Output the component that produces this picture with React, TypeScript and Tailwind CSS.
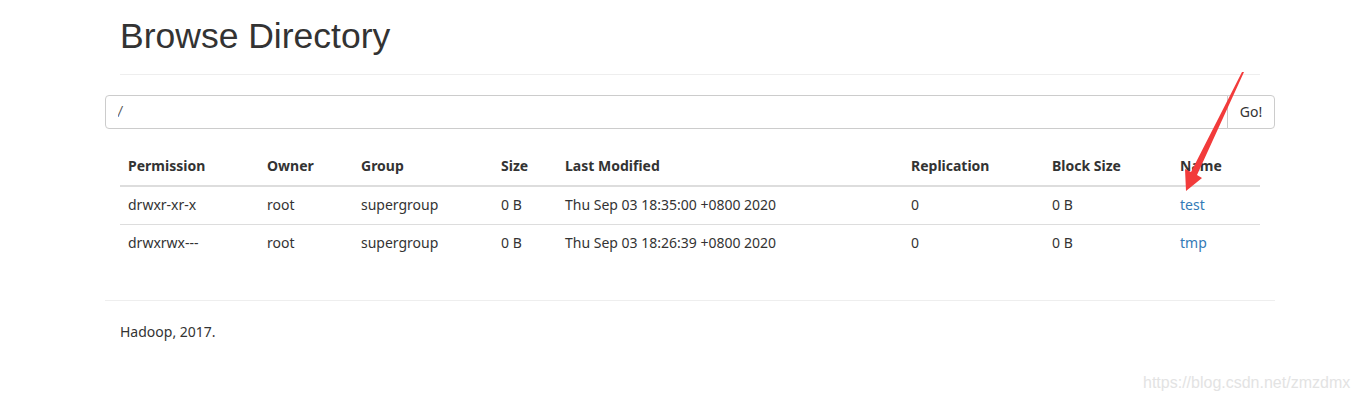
const ROWS = [
  {
    permission: 'drwxr-xr-x',
    owner: 'root',
    group: 'supergroup',
    size: '0 B',
    modified: 'Thu Sep 03 18:35:00 +0800 2020',
    replication: '0',
    blockSize: '0 B',
    name: 'test',
  },
  {
    permission: 'drwxrwx---',
    owner: 'root',
    group: 'supergroup',
    size: '0 B',
    modified: 'Thu Sep 03 18:26:39 +0800 2020',
    replication: '0',
    blockSize: '0 B',
    name: 'tmp',
  },
];

const COLUMNS = [
  { label: 'Permission', width: 'w-[139px]' },
  { label: 'Owner', width: 'w-[94px]' },
  { label: 'Group', width: 'w-[140px]' },
  { label: 'Size', width: 'w-[64px]' },
  { label: 'Last Modified', width: 'w-[346px]' },
  { label: 'Replication', width: 'w-[141px]' },
  { label: 'Block Size', width: 'w-[128px]' },
  { label: 'Name', width: 'w-[88px]' },
];

export default function App() {
  return (
    <div
      className="relative h-[400px] w-[1357px] overflow-hidden bg-white text-[14px] leading-[20px] text-[#333]"
      style={{ fontFamily: '"Noto Sans", "Noto Sans CJK SC", sans-serif' }}
    >
      <div className="ml-[105px] w-[1170px]">
        {/* Page header */}
        <div className="px-[15px]">
          <h1
            className="mt-[16px] border-b border-[#eee] pb-[18px] text-[35.5px] leading-[40px] font-normal text-[#333]"
            style={{ fontFamily: '"Liberation Sans", Arial, sans-serif' }}
          >
            Browse Directory
          </h1>
        </div>

        {/* Path input */}
        <div className="mt-[20px] flex h-[34px]">
          <input
            defaultValue="/"
            className="h-[34px] flex-1 rounded-l-[4px] border border-[#ccc] px-[12px] text-[14px] text-[#555] italic outline-none"
            style={{ fontFamily: '"Liberation Sans", Arial, sans-serif' }}
          />
          <button className="-ml-px h-[34px] w-[48px] rounded-r-[4px] border border-[#ccc] bg-white text-[14px] text-[#333]">
            Go!
          </button>
        </div>

        {/* Listing */}
        <div className="px-[15px]">
          <table className="mt-[20px] w-[1140px] table-fixed border-collapse">
            <thead>
              <tr>
                {COLUMNS.map((c) => (
                  <th
                    key={c.label}
                    className={`${c.width} border-b-2 border-[#ddd] px-[8px] pt-[7px] pb-[9px] text-left font-bold`}
                  >
                    {c.label}
                  </th>
                ))}
              </tr>
            </thead>
            <tbody>
              {ROWS.map((r, i) => (
                <tr key={r.name} className={i === 0 ? 'border-b border-[#ddd]' : ''}>
                  <td className="px-[8px] pt-[8px] pb-[9px]">{r.permission}</td>
                  <td className="px-[8px] pt-[8px] pb-[9px]">{r.owner}</td>
                  <td className="px-[8px] pt-[8px] pb-[9px]">{r.group}</td>
                  <td className="px-[8px] pt-[8px] pb-[9px]">{r.size}</td>
                  <td className="px-[8px] pt-[8px] pb-[9px]">{r.modified}</td>
                  <td className="px-[8px] pt-[8px] pb-[9px]">{r.replication}</td>
                  <td className="px-[8px] pt-[8px] pb-[9px]">{r.blockSize}</td>
                  <td className="px-[8px] pt-[8px] pb-[9px]">
                    <a href="#" className="text-[#337ab7]">
                      {r.name}
                    </a>
                  </td>
                </tr>
              ))}
            </tbody>
          </table>
        </div>

        {/* Footer */}
        <div className="mt-[38px] border-t border-[#eee] px-[15px] pt-[21px]">
          <p>Hadoop, 2017.</p>
        </div>
      </div>

      {/* Annotation arrow */}
      <svg className="absolute top-0 left-0" width="1357" height="400" viewBox="0 0 1357 400">
        <polygon
          points="1242,72 1244,72 1197,175 1202,178 1186,191 1185,169 1191,172"
          fill="#f23b3b"
        />
      </svg>

      {/* Watermark */}
      <div
        className="absolute top-[373px] left-[1143px] text-[16px] leading-[20px] text-[#e3e3e3]"
        style={{ fontFamily: '"Liberation Sans", Arial, sans-serif' }}
      >
        https://blog.csdn.net/zmzdmx
      </div>
    </div>
  );
}
